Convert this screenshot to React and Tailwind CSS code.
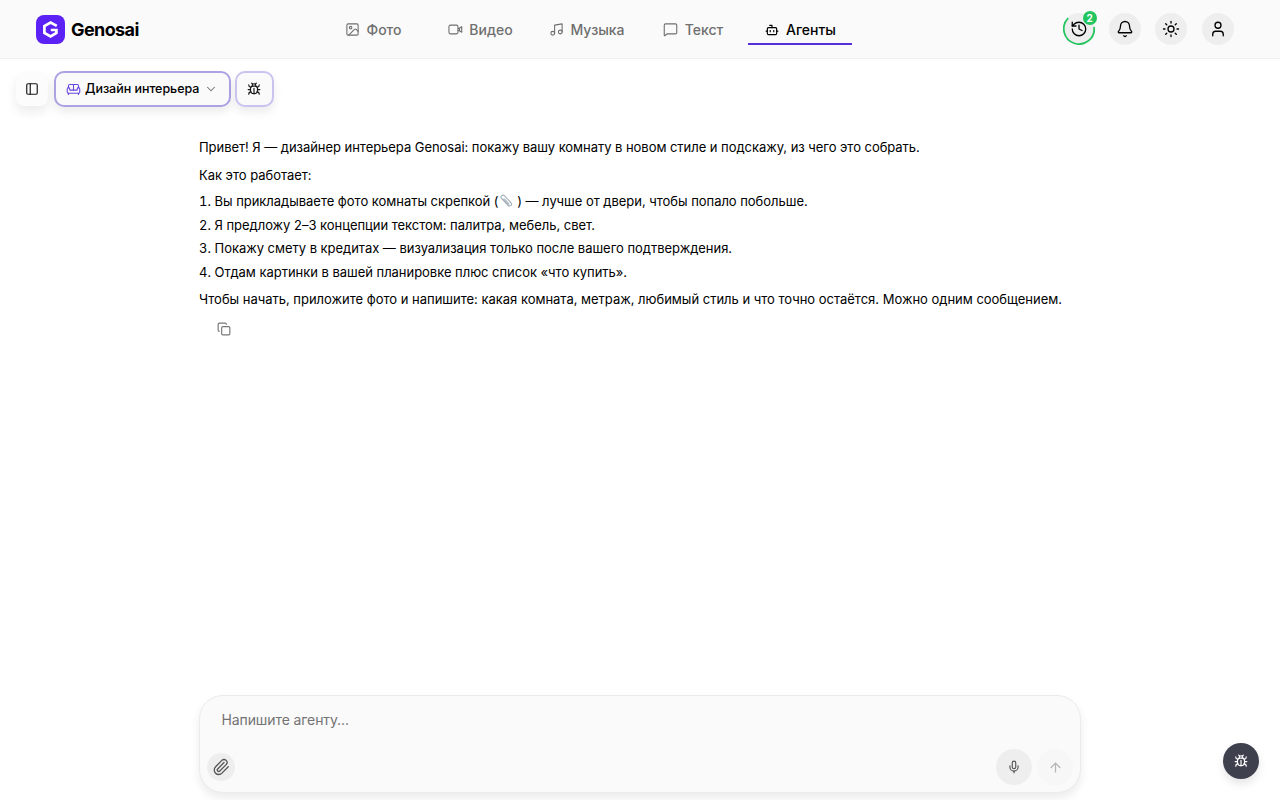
import { Image, Music, MessageSquare, Bot, History, Bell, Sun, User, PanelLeft, Sofa, ChevronDown, Bug, Copy, Paperclip, Mic, ArrowUp } from "lucide-react";

function Camera({ size, strokeWidth }) {
  return (
    <svg width={size} height={size} viewBox="0 0 24 24" fill="none" stroke="currentColor" strokeWidth={strokeWidth} strokeLinecap="round" strokeLinejoin="round">
      <rect x="1.5" y="5" width="14.5" height="14" rx="2.5" />
      <path d="m16 10.5 1.5 0 4.5-3v9l-4.5-3H16M18.5 10v4" />
    </svg>
  );
}

const tabs = [
  { label: "Фото", Icon: Image, size: 15, box: "w-[96px] mr-[11px]" },
  { label: "Видео", Icon: Camera, size: 15, box: "w-[96px] mr-[6px]" },
  { label: "Музыка", Icon: Music, size: 15, box: "w-[105px] mr-[8px]" },
  { label: "Текст", Icon: MessageSquare, size: 15, box: "w-[92px] mr-[9px]" },
  { label: "Агенты", Icon: Bot, size: 14, box: "w-[104px]", active: true },
];

const steps = [
  <>
    Вы прикладываете фото комнаты скрепкой (
    <svg className="inline size-[15px] align-[-3px]" viewBox="0 0 24 24" fill="none" stroke="#a7b2bc" strokeWidth="1.8" strokeLinecap="round">
      <path d="m6 8 9 10c3 3 7-1 4-4L9 3C6 0 1 4 4 7l11 12M9 8l7 8" />
    </svg>
    {" ) — лучше от двери, чтобы попало побольше."}
  </>,
  "Я предложу 2–3 концепции текстом: палитра, мебель, свет.",
  "Покажу смету в кредитах — визуализация только после вашего подтверждения.",
  "Отдам картинки в вашей планировке плюс список «что купить».",
];

function Logo() {
  return (
    <svg className="size-[29px] shrink-0" viewBox="0 0 29 29" fill="none">
      <rect width="29" height="29" rx="8" fill="#5b21f5" />
      <path d="M20.8 10.9 14.6 7.6 8.4 11.1v6.8l6.2 3.5 5.8-3.4v-3h-5.6" stroke="#fff" strokeWidth="2.7" strokeLinejoin="miter" />
    </svg>
  );
}

function Header() {
  return (
    <header className="flex h-[59px] shrink-0 items-center border-b border-[#f1f1f1] bg-[#fafafa]">
      <div className="flex w-[325px] items-center gap-[6.5px] pl-[35.5px]">
        <Logo />
        <span className="text-[18px] font-bold tracking-[-0.6px] text-black">Genosai</span>
      </div>
      <nav className="flex">
        {tabs.map(({ label, Icon, size, box, active }) => (
          <a key={label} className={`flex h-8 items-center justify-center gap-[6px] border-b-2 pt-[3px] text-[14px] font-medium ${box} ${active ? "border-[#5530d8] text-black" : "border-transparent text-[#6f6f6f]"}`}>
            <span className="grid size-4 place-items-center">
              <Icon size={size} strokeWidth={active ? 2 : 1.75} />
            </span>
            {label}
          </a>
        ))}
      </nav>
      <div className="ml-auto flex items-center gap-[14.3px] pr-[46.5px]">
        <button className="relative grid size-8 place-items-center rounded-full bg-[#eeeeee]">
          <svg className="absolute inset-0" width="32" height="32" fill="none">
            <path d="M5.2 5.2A15.2 15.2 0 1 0 31.1 14" stroke="#22c55e" strokeWidth="1.8" />
          </svg>
          <History size={18} strokeWidth={1.75} />
          <span className="absolute -top-[2px] -right-[2px] grid size-[14px] place-items-center rounded-full bg-[#22c55e] text-[10px] leading-none font-bold text-white">2</span>
        </button>
        {[Bell, Sun, User].map((Icon, i) => (
          <button key={i} className="grid size-8 place-items-center rounded-full bg-[#eeeeee]">
            <Icon size={18} strokeWidth={1.75} />
          </button>
        ))}
      </div>
    </header>
  );
}

function Toolbar() {
  return (
    <div className="flex h-[36px] items-center text-[#171717]">
      <button className="ml-[16px] grid h-[34px] w-8 place-items-center rounded-lg bg-[#fcfcfc] shadow-[0_6px_12px_rgba(0,0,0,0.08)]">
        <PanelLeft size={14} strokeWidth={2} />
      </button>
      <button className="ml-[5.5px] flex h-[36px] w-[177.5px] items-center rounded-[10px] border-2 border-[#ada0e3] bg-[#fafafa] pl-[10px] text-[12.5px] font-medium text-black shadow-[0_5px_10px_rgba(0,0,0,0.08)]">
        <Sofa size={15} strokeWidth={1.75} className="mr-[4.5px] shrink-0 text-[#6a48e0]" />
        <span className="tracking-[-0.04px] whitespace-nowrap">Дизайн интерьера</span>
        <ChevronDown size={14} strokeWidth={1.75} className="ml-[5px] shrink-0 text-[#707070]" />
      </button>
      <button className="ml-[4px] grid h-[36px] w-[38.5px] place-items-center rounded-[10px] border-2 border-[#cbc3ef] bg-[#fafafa] shadow-[0_5px_10px_rgba(0,0,0,0.08)]">
        <Bug size={14} strokeWidth={2} />
      </button>
    </div>
  );
}

export default function App() {
  return (
    <div className="flex h-[800px] w-full flex-col overflow-hidden bg-white font-['Inter','Liberation_Sans',sans-serif] text-black">
      <Header />
      <main className="flex flex-1 flex-col pt-[12px]">
        <Toolbar />
        <article className="mt-[28px] pl-[199px] text-[13px] leading-[24px] tracking-[-0.03px] whitespace-nowrap text-black">
          <p className="tracking-[-0.045px]">Привет! Я — дизайнер интерьера Genosai: покажу вашу комнату в новом стиле и подскажу, из чего это собрать.</p>
          <p className="mt-[4px]">Как это работает:</p>
          <ol className="mt-[3px] leading-[23.6px]">
            {steps.map((step, i) => (
              <li key={i}>
                <span className="inline-block w-[15.5px] tabular-nums">{i + 1}.</span>
                {step}
              </li>
            ))}
          </ol>
          <p className="mt-[2.6px] tracking-[-0.015px]">Чтобы начать, приложите фото и напишите: какая комната, метраж, любимый стиль и что точно остаётся. Можно одним сообщением.</p>
          <button className="mt-[11px] ml-[18px] block text-[#777]"><Copy size={14} strokeWidth={2} /></button>
        </article>
        <div className="mt-auto flex items-end pb-[7px]">
          <section className="ml-[199px] flex h-[98px] w-[882px] flex-col justify-between rounded-[24px] border border-[#ebebeb] bg-[#fafafa] px-[7px] pt-[14px] pb-[7px] shadow-[0_5px_10px_rgba(0,0,0,0.08)]">
            <div className="pl-[14.5px] text-[14px] leading-[20px] tracking-[-0.1px] text-[#737373]">Напишите агенту...</div>
            <div className="flex items-center">
              <button className="grid size-7 place-items-center rounded-full bg-[#eeeeee] text-[#555]"><Paperclip size={18} strokeWidth={1.75} /></button>
              <button className="ml-auto grid size-[36px] place-items-center rounded-full bg-[#eeeeee] text-[#555]"><Mic size={14} strokeWidth={2} /></button>
              <button className="ml-[5px] grid size-[36px] place-items-center rounded-full bg-[#f7f7f7] text-[#b5b5b5]"><ArrowUp size={15} strokeWidth={2} /></button>
            </div>
          </section>
          <button className="mb-[14px] ml-[142px] grid size-[36px] place-items-center rounded-full bg-[#3f404e] text-white shadow-[0_5px_9px_rgba(0,0,0,0.1)]"><Bug size={14} strokeWidth={2} /></button>
        </div>
      </main>
    </div>
  );
}
